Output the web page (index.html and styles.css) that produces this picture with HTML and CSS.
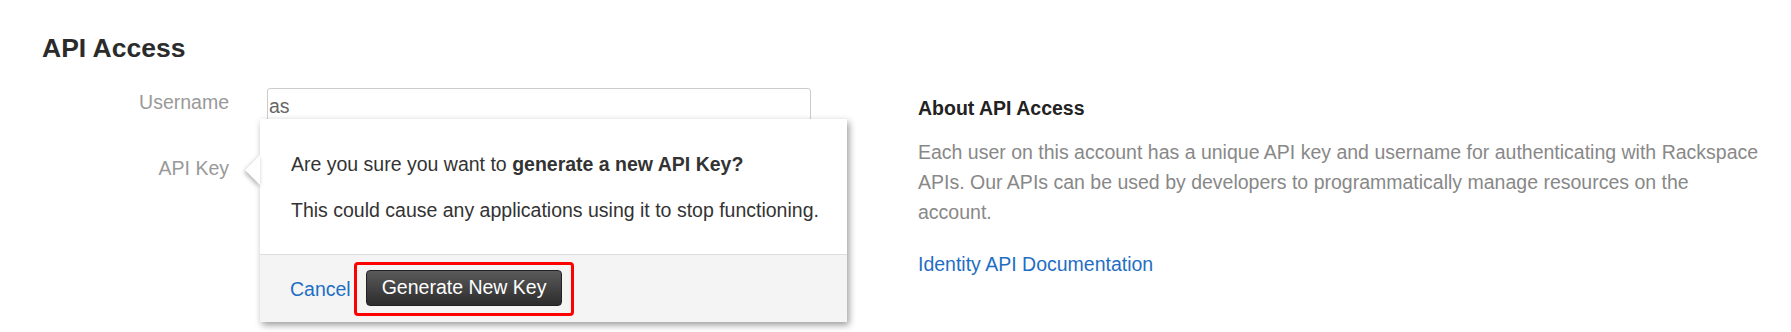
FILE: index.html
```html
<!DOCTYPE html>
<html lang="en">

<head>
	<meta charset="UTF-8">
	<meta name="viewport" content="width=device-width, initial-scale=1.0">
	<title>API Access</title>
	<link rel="stylesheet" href="styles.css">
</head>

<body>
	<div id="page">
		<h1>API Access</h1>

		<div class="content">
			<div class="credentials">
				<div class="field-label">Username</div>
				<div class="field-value">
					<div class="text-input">as</div>
				</div>

				<div class="field-label">API Key</div>
				<div class="field-value key-value"></div>

				<div class="popover">
					<div class="popover-arrow"></div>
					<div class="popover-body">
						<p>Are you sure you want to <strong>generate a new API Key?</strong></p>
						<p>This could cause any applications using it to stop functioning.</p>
					</div>
					<div class="popover-footer">
						<a href="#" class="cancel-link">Cancel</a>
						<span class="highlight">
							<button class="btn-dark">Generate New Key</button>
						</span>
					</div>
				</div>
			</div>

			<div class="about">
				<h2>About API Access</h2>
				<p>Each user on this account has a unique API key and username for authenticating with Rackspace APIs. Our APIs can be used by developers to programmatically manage resources on the account.</p>
				<a href="#" class="doc-link">Identity API Documentation</a>
			</div>
		</div>
	</div>
</body>

</html>
```

FILE: styles.css
```css
body {
	margin: 0;
	background: #fff;
	font-family: 'Liberation Sans', Arial, sans-serif;
	font-size: 19.5px;
	color: #333;
}

#page {
	box-sizing: border-box;
	min-height: 100vh;
	padding: 32px 0 0 42px;
}

h1 {
	margin: 0;
	font-size: 26.5px;
	line-height: 32px;
	font-weight: bold;
	color: #2b2b2b;
}

.content {
	display: flex;
	gap: 107px;
	margin-top: 24px;
}

.credentials {
	position: relative;
	display: grid;
	grid-template-columns: 187px 544px;
	column-gap: 38px;
	row-gap: 30px;
	width: 769px;
	align-content: start;
}

.field-label {
	padding-top: 3px;
	line-height: 22px;
	text-align: right;
	color: #999;
}

.text-input {
	box-sizing: border-box;
	height: 36px;
	padding-left: 1px;
	border: 1px solid #ccc;
	border-radius: 3px;
	line-height: 34px;
	color: #666;
}

.key-value {
	height: 36px;
}

/* confirmation popover */
.popover {
	position: absolute;
	left: 218px;
	top: 31px;
	width: 587px;
	background: #fff;
	box-shadow: 2px 3px 7px rgba(0, 0, 0, 0.4);
	z-index: 2;
}

.popover-arrow {
	position: absolute;
	left: -15px;
	top: 36px;
	width: 0;
	height: 0;
	border-top: 15px solid transparent;
	border-bottom: 15px solid transparent;
	border-right: 15px solid #fff;
	filter: drop-shadow(-1px 2px 2px rgba(0, 0, 0, 0.3));
}

.popover-body {
	padding: 34px 10px 33px 31px;
	background: #fff;
}

.popover-body p {
	margin: 0;
	line-height: 22px;
	color: #333;
	white-space: nowrap;
}

.popover-body p + p {
	margin-top: 24px;
}

.popover-footer {
	display: flex;
	align-items: center;
	height: 67px;
	padding-left: 30px;
	background: #f4f4f4;
	border-top: 1px solid #ddd;
}

.cancel-link {
	color: #1f6ec4;
	text-decoration: none;
	line-height: 22px;
	margin-right: 3px;
}

.highlight {
	display: inline-flex;
	padding: 5px 9px 7px 9px;
	border: 3px solid #f00;
	border-radius: 4px;
}

.btn-dark {
	height: 36px;
	padding: 0 15px;
	border: 1px solid #222;
	border-radius: 4px;
	background: linear-gradient(#5a5a5a, #2c2c2c);
	color: #fff;
	font-family: inherit;
	font-size: 19.5px;
	cursor: pointer;
}

/* side help */
.about {
	width: 842px;
}

.about h2 {
	margin: 9px 0 0;
	font-size: 19.5px;
	line-height: 22px;
	font-weight: bold;
	color: #222;
}

.about p {
	margin: 18px 0 0;
	line-height: 30px;
	color: #888;
}

.doc-link {
	display: inline-block;
	margin-top: 26px;
	line-height: 22px;
	color: #1f6ec4;
	text-decoration: none;
}
```
